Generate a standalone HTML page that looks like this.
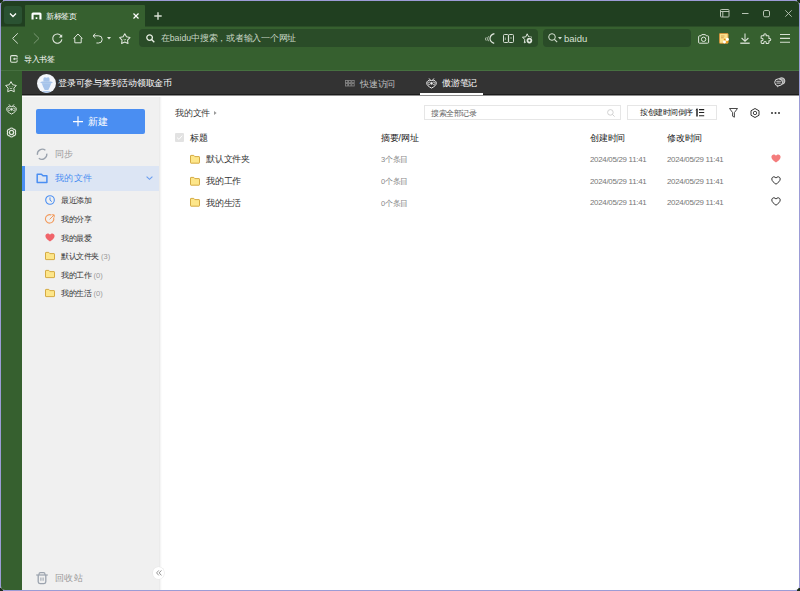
<!DOCTYPE html>
<html><head><meta charset="utf-8">
<style>
*{box-sizing:border-box;margin:0;padding:0}
html,body{width:800px;height:591px;overflow:hidden;background:#9c9cd6}
body{font-family:"Liberation Sans",sans-serif;position:relative}
.a{position:absolute}
.t{position:absolute;white-space:nowrap;line-height:1}
svg{position:absolute;overflow:visible}
.s12{font-size:7.5px;letter-spacing:-0.5px}
.s14{font-size:8.75px;letter-spacing:-0.25px}
.s15{font-size:9.375px;letter-spacing:0.375px}
.s16{font-size:10px}
.lat{letter-spacing:0}
</style></head><body>
<!-- window background layers -->
<div class="a" style="left:0;top:0;width:3px;height:3px;background:#1a2e1a"></div><div class="a" style="left:797px;top:0;width:3px;height:3px;background:#1a2e1a"></div><div class="a" style="left:0;top:588px;width:3px;height:3px;background:#1a2e1a"></div><div class="a" style="left:797px;top:588px;width:3px;height:3px;background:#1a2e1a"></div>
<div class="a" style="left:1px;top:1px;width:798px;height:589px;background:#fff;border-radius:4px;overflow:hidden">
  <div class="a" style="left:0;top:0;width:798px;height:25px;background:#203f20"></div>
  <div class="a" style="left:0;top:25px;width:798px;height:44px;background:#36602f"></div>
  <div class="a" style="left:0;top:25px;width:24px;height:1px;background:#2b4e27"></div><div class="a" style="left:144px;top:25px;width:654px;height:1px;background:#2b4e27"></div>
  <div class="a" style="left:0;top:69px;width:21px;height:520px;background:#36602f"></div>
</div>
<!-- tab strip -->
<div class="a" style="left:4px;top:6px;width:18px;height:18px;background:#2a5232;border-radius:3px"></div>
<svg style="left:9px;top:12px" width="8" height="6"><path d="M1 1.5 L4 4.5 L7 1.5" stroke="#fff" stroke-width="1.3" fill="none"/></svg>
<div class="a" style="left:25px;top:5px;width:120px;height:22px;background:#36602f;border-radius:1px 1px 0 0"></div>
<svg style="left:31px;top:12px" width="11" height="8"><path d="M0.5 7.6 V2 Q0.5 0.5 2 0.5 H9 Q10.5 0.5 10.5 2 V7.6 H8.4 V2.7 H2.6 V7.6 Z" fill="#fff"/><rect x="4.6" y="5.2" width="1.8" height="1.8" rx="0.4" fill="#fff"/></svg>
<div class="t s12" style="left:46px;top:13px;color:#fff;font-weight:500">新标签页</div>
<svg style="left:133px;top:13px" width="6" height="6"><path d="M0.5 0.5 L5.5 5.5 M5.5 0.5 L0.5 5.5" stroke="#fff" stroke-width="1.2"/></svg>
<svg style="left:154px;top:12px" width="8" height="8"><path d="M4 0.3 V7.7 M0.3 4 H7.7" stroke="#d8e0d4" stroke-width="1.4"/></svg>

<!-- window controls -->
<svg style="left:720px;top:9px" width="10" height="8"><rect x="0.5" y="0.5" width="8.5" height="7.5" rx="0.8" stroke="#b9c5b5" fill="none"/><path d="M0.5 2.5 H9 M2.8 2.5 V8" stroke="#b9c5b5" fill="none"/></svg>
<svg style="left:742px;top:13px" width="7" height="2"><path d="M0 0.5 H6.5" stroke="#b9c5b5" stroke-width="1"/></svg>
<svg style="left:763px;top:10px" width="7" height="7"><rect x="0.5" y="0.5" width="6" height="6.3" rx="1.4" stroke="#b9c5b5" fill="none"/></svg>
<svg style="left:785px;top:10px" width="7" height="7"><path d="M0.3 0.3 L6.7 6.7 M6.7 0.3 L0.3 6.7" stroke="#b9c5b5" stroke-width="0.9"/></svg>

<!-- toolbar -->
<svg style="left:12px;top:33px" width="7" height="11"><path d="M5.8 0.3 L0.6 5.4 L5.8 10.5" stroke="#d6e0d2" stroke-width="1" fill="none"/></svg>
<svg style="left:33px;top:33px" width="7" height="11"><path d="M0.8 0.3 L6 5.4 L0.8 10.5" stroke="#7a9873" stroke-width="1" fill="none"/></svg>
<svg style="left:52px;top:33px" width="11" height="11"><path d="M9.3 3.2 A4.6 4.6 0 1 0 9.9 6.4" stroke="#dfe6dc" stroke-width="1.1" fill="none"/><path d="M10.2 1.2 V4.6 H6.8 Z" fill="#dfe6dc"/></svg>
<svg style="left:73px;top:33px" width="11" height="11"><path d="M0.8 5.4 L5 1 L9.2 5.4 H8.2 V9.8 H1.8 V5.4 Z" stroke="#dfe6dc" stroke-width="1" fill="none" stroke-linejoin="round"/></svg>
<svg style="left:92px;top:33px" width="11" height="11"><path d="M3.4 0.6 L1 2.8 L3.4 5" stroke="#dfe6dc" stroke-width="1" fill="none" stroke-linejoin="round"/><path d="M1 2.8 H6.6 A3.6 3.6 0 0 1 6.6 10 H4.4" stroke="#dfe6dc" stroke-width="1" fill="none"/></svg>
<svg style="left:107px;top:37px" width="4" height="3"><path d="M0 0 H4 L2 2.5Z" fill="#dfe6dc"/></svg>
<svg style="left:118.8px;top:32.8px" width="12" height="12"><path d="M5.80 0.80 L7.50 3.85 L10.94 4.53 L8.56 7.10 L8.97 10.57 L5.80 9.10 L2.63 10.57 L3.04 7.10 L0.66 4.53 L4.10 3.85 Z" stroke="#dfe6dc" stroke-width="1.05" fill="none" stroke-linejoin="round"/><path d="M4.5 6.3 Q5.8 7.6 7.1 6.3" stroke="#dfe6dc" stroke-width="0.75" fill="none"/></svg>

<!-- address bar -->
<div class="a" style="left:139px;top:29px;width:399px;height:18px;background:#2a4c28;border-radius:4px"></div>
<svg style="left:146px;top:34px" width="9" height="9"><circle cx="3.6" cy="3.6" r="2.8" stroke="#e8efe4" stroke-width="1.3" fill="none"/><path d="M5.6 5.6 L8.3 8.3" stroke="#e8efe4" stroke-width="1.4"/></svg>
<div class="t s14" style="left:161px;top:34px;color:#c8d6c4">在<span class="lat">baidu</span>中搜索，或者输入一个网址</div>
<svg style="left:484px;top:33px" width="11" height="11"><path d="M10.4 0.6 C7.6 1.4 6 3.4 6 5.6 C6 7.8 7.6 9.6 10.2 10.4" stroke="#dfe6dc" stroke-width="1.2" fill="none"/><path d="M4.6 3.4 C3.4 4.6 3.4 6.8 4.6 8.2 M2.2 4.4 C1.4 5.2 1.4 6.6 2.2 7.6" stroke="#dfe6dc" stroke-width="0.85" fill="none"/></svg>
<svg style="left:503px;top:34px" width="11" height="9"><rect x="0.5" y="0.5" width="4.9" height="8" rx="1" stroke="#dfe6dc" stroke-width="0.95" fill="none"/><rect x="5.6" y="0.5" width="4.9" height="8" rx="1" stroke="#dfe6dc" stroke-width="0.95" fill="none"/><path d="M2.3 3.5 V6 M8 3 V5" stroke="#dfe6dc" stroke-width="0.6"/></svg>
<svg style="left:522px;top:33px" width="12" height="12"><path d="M5.20 0.80 L6.61 3.86 L9.96 4.25 L7.48 6.54 L8.14 9.85 L5.20 8.20 L2.26 9.85 L2.92 6.54 L0.44 4.25 L3.79 3.86 Z" stroke="#dfe6dc" stroke-width="1" fill="none" stroke-linejoin="round"/><circle cx="7.4" cy="7.6" r="3.6" fill="#2a4c28"/><circle cx="7.4" cy="7.6" r="2.8" fill="#dfe6dc"/><circle cx="7.4" cy="7.6" r="1.1" fill="#2a4c28"/></svg>

<!-- search box -->
<div class="a" style="left:543px;top:29px;width:148px;height:18px;background:#2a4c28;border-radius:4px"></div>
<svg style="left:548px;top:33px" width="10" height="10"><circle cx="4" cy="4" r="3.3" stroke="#d6e0d2" stroke-width="1" fill="none"/><path d="M6.4 6.4 L9.2 9.2" stroke="#d6e0d2" stroke-width="1.1"/></svg>
<svg style="left:558px;top:37px" width="4" height="3"><path d="M0 0 H4 L2 2.5Z" fill="#d6e0d2"/></svg>
<div class="t" style="left:564px;top:34px;font-size:9.5px;color:#d6e0d2">baidu</div>

<!-- right toolbar icons -->
<svg style="left:697.5px;top:33.5px" width="12" height="10"><path d="M0.6 2.8 Q0.6 1.8 1.6 1.8 H3 L3.8 0.6 H7.4 L8.2 1.8 H9.6 Q10.6 1.8 10.6 2.8 V8.4 Q10.6 9.2 9.6 9.2 H1.6 Q0.6 9.2 0.6 8.4 Z" stroke="#dfe6dc" stroke-width="1" fill="none" stroke-linejoin="round"/><circle cx="5.6" cy="5.3" r="2.2" stroke="#dfe6dc" stroke-width="1" fill="none"/></svg>
<svg style="left:719px;top:33px" width="11" height="11"><rect x="0.5" y="0.5" width="8.6" height="9.8" rx="0.6" fill="#fbe08a" stroke="#d4913a" stroke-width="0.9"/><path d="M2 3 H5.5 M2 4.8 H4.8" stroke="#c98a3c" stroke-width="0.7"/><path d="M5.6 5.4 L7 6.6 L5.8 8 L4.6 6.6 Z" fill="#e08a0e"/><circle cx="8.4" cy="6.2" r="1.5" fill="#fff"/><circle cx="5.4" cy="9" r="1.4" fill="#fff"/><circle cx="8" cy="9" r="1.1" fill="#f09a10"/></svg>
<svg style="left:740px;top:33px" width="10" height="11"><path d="M5 0.5 V8.2 M1.6 5 L5 8.3 L8.4 5" stroke="#dfe6dc" stroke-width="1.05" fill="none"/><path d="M0.3 10.2 H9.7" stroke="#dfe6dc" stroke-width="1.3"/></svg>
<svg style="left:760px;top:32.5px" width="12" height="12"><g transform="translate(0.2 0.4) scale(0.46)"><path d="M20.5 11H19V7c0-1.1-.9-2-2-2h-4V3.5C13 2.12 11.88 1 10.5 1S8 2.12 8 3.5V5H4c-1.1 0-1.99.9-1.99 2v3.8H3.5c1.49 0 2.7 1.21 2.7 2.7s-1.21 2.7-2.7 2.7H2V20c0 1.1.9 2 2 2h3.8v-1.5c0-1.49 1.21-2.7 2.7-2.7 1.490 0 2.7 1.21 2.7 2.7V22H17c1.1 0 2-.9 2-2v-4h1.5c1.38 0 2.5-1.120 2.5-2.5S21.88 11 20.5 11z" fill="none" stroke="#dfe6dc" stroke-width="2.2" stroke-linejoin="round"/></g></svg>
<svg style="left:780px;top:34px" width="10" height="9"><path d="M0 0.5 H10 M0 4.4 H10 M0 8.2 H10" stroke="#d6e0d2" stroke-width="1.1"/></svg>

<!-- bookmark bar -->
<svg style="left:10px;top:55px" width="9" height="9"><path d="M7.2 2.6 V1.8 Q7.2 0.6 6 0.6 H1.8 Q0.6 0.6 0.6 1.8 V6 Q0.6 7.2 1.8 7.2 H6 Q7.2 7.2 7.2 6 V5.2" stroke="#dfe6dc" stroke-width="1.05" fill="none"/><path d="M7.8 3.9 H4.4" stroke="#dfe6dc" stroke-width="1"/><path d="M2.8 3.9 L4.8 2.5 V5.3 Z" fill="#dfe6dc"/></svg>
<div class="t s12" style="left:24px;top:56px;color:#fff">导入书签</div>

<!-- left sidebar icons -->
<svg style="left:5px;top:81px" width="12" height="12"><path d="M6.00 0.60 L7.76 3.77 L11.33 4.47 L8.85 7.13 L9.29 10.73 L6.00 9.20 L2.71 10.73 L3.15 7.13 L0.67 4.47 L4.24 3.77 Z" stroke="#dfe6dc" stroke-width="1" fill="none" stroke-linejoin="round"/><path d="M4.7 7.2 Q6 8.2 7.3 7.2" stroke="#dfe6dc" stroke-width="0.7" fill="none"/><circle cx="4.9" cy="5.8" r="0.45" fill="#dfe6dc"/><circle cx="7.1" cy="5.8" r="0.45" fill="#dfe6dc"/></svg>
<svg style="left:5.5px;top:104px" width="11" height="11"><path d="M3 0.4 L4.2 1.9 M8 0.4 L6.8 1.9" stroke="#dfe6dc" stroke-width="0.9"/><path d="M5.5 2.5 C2.8 1.5 0.7 3.1 0.7 5.2 C0.7 7.1 2.7 8.6 5.5 10.1 C8.3 8.6 10.3 7.1 10.3 5.2 C10.3 3.1 8.2 1.5 5.5 2.5 Z" fill="none" stroke="#dfe6dc" stroke-width="1"/><circle cx="3.2" cy="5.3" r="1.3" fill="none" stroke="#dfe6dc" stroke-width="0.75"/><circle cx="7.8" cy="5.3" r="1.3" fill="none" stroke="#dfe6dc" stroke-width="0.75"/><path d="M5.5 3.4 L6.3 5.3 L5.5 7.3 L4.7 5.3 Z" fill="#dfe6dc"/></svg>
<svg style="left:5.5px;top:126.5px" width="11" height="11"><path d="M3.55 2.12 Q5.50 -0.10 7.45 2.12 Q10.35 2.70 9.40 5.50 Q10.35 8.30 7.45 8.88 Q5.50 11.10 3.55 8.88 Q0.65 8.30 1.60 5.50 Q0.65 2.70 3.55 2.12 Z" stroke="#dfe6dc" stroke-width="1.2" fill="none"/><circle cx="5.5" cy="5.5" r="2.1" stroke="#dfe6dc" stroke-width="1.3" fill="none"/></svg>

<!-- note header -->
<div class="a" style="left:1px;top:70px;width:798px;height:1px;background:#467040"></div><div class="a" style="left:22px;top:71px;width:777px;height:24px;background:#333"></div>
<div class="a" style="left:22px;top:94px;width:777px;height:1px;background:#1c1c1c"></div>

<svg style="left:37px;top:73.5px" width="19" height="19"><defs><clipPath id="av"><circle cx="9.5" cy="9.5" r="9.3"/></clipPath></defs><circle cx="9.5" cy="9.5" r="9.5" fill="#f3f6fb"/><g clip-path="url(#av)" fill="#a6c3ea"><path d="M6.5 7.6 C6.2 5.2 6.4 3.4 7.6 3.2 C8.4 3.1 9 3.7 9.5 3.7 C10 3.7 10.6 3.1 11.4 3.2 C12.6 3.4 12.8 5.2 12.5 7.6 Z"/><ellipse cx="9.5" cy="8.4" rx="6.2" ry="1.2"/><path d="M4.8 9.2 H14.2 Q13 13 11.3 16 H7.7 Q6 13 4.8 9.2 Z"/><ellipse cx="9.5" cy="20.5" rx="8" ry="3.6"/></g></svg>
<div class="t s14" style="left:58px;top:79px;color:#fff;font-weight:500">登录可参与签到活动领取金币</div>
<svg style="left:345px;top:80px" width="10" height="7"><g fill="none" stroke="#8a8a8a" stroke-width="0.8"><rect x="0.4" y="0.4" width="2.4" height="2.4"/><rect x="3.6" y="0.4" width="2.4" height="2.4"/><rect x="6.8" y="0.4" width="2.4" height="2.4"/><rect x="0.4" y="3.6" width="2.4" height="2.4"/><rect x="3.6" y="3.6" width="2.4" height="2.4"/><rect x="6.8" y="3.6" width="2.4" height="2.4"/></g></svg>
<div class="t s14" style="left:360px;top:80px;color:#c0c0c0">快速访问</div>
<svg style="left:426px;top:77.5px" width="11" height="11"><path d="M3 0.4 L4.2 1.9 M8 0.4 L6.8 1.9" stroke="#ececec" stroke-width="0.9"/><path d="M5.5 2.5 C2.8 1.5 0.7 3.1 0.7 5.2 C0.7 7.1 2.7 8.6 5.5 10.1 C8.3 8.6 10.3 7.1 10.3 5.2 C10.3 3.1 8.2 1.5 5.5 2.5 Z" fill="none" stroke="#ececec" stroke-width="1"/><circle cx="3.2" cy="5.3" r="1.3" fill="none" stroke="#ececec" stroke-width="0.7"/><circle cx="7.8" cy="5.3" r="1.3" fill="none" stroke="#ececec" stroke-width="0.7"/><path d="M5.5 3.4 L6.3 5.3 L5.5 7.2 L4.7 5.3 Z" fill="#ececec"/></svg>
<div class="t s14" style="left:442px;top:79px;color:#fff">傲游笔记</div>
<div class="a" style="left:420px;top:93px;width:63px;height:3px;background:#fff"></div>
<svg style="left:774px;top:77px" width="12" height="11"><circle cx="7.6" cy="4" r="3.3" fill="#9a9a9a" stroke="#d8d8d8" stroke-width="0.9"/><ellipse cx="4.6" cy="5.3" rx="3.9" ry="3.5" fill="#333" stroke="#e0e0e0" stroke-width="1"/><path d="M3.2 8.5 L3.4 9.9 L4.8 8.7" fill="#333" stroke="#e0e0e0" stroke-width="0.8"/><path d="M2.3 4.3 H6.9 M2.5 6.1 H6.7" stroke="#e0e0e0" stroke-width="0.85"/></svg>

<!-- left panel -->
<div class="a" style="left:22px;top:97px;width:137px;height:493px;background:#f0f0f0"></div><div class="a" style="left:159px;top:97px;width:1px;height:493px;background:#ebebeb"></div><div class="a" style="left:160px;top:97px;width:1px;height:493px;background:#f5f5f5"></div><div class="a" style="left:161px;top:97px;width:1px;height:493px;background:#fcfcfc"></div>
<div class="a" style="left:22px;top:95px;width:777px;height:1px;background:#8e8e8e"></div><div class="a" style="left:22px;top:96px;width:777px;height:1px;background:#fff"></div>
<div class="a" style="left:36px;top:109px;width:109px;height:25px;background:#4a8ef2;border-radius:2px"></div>
<svg style="left:73px;top:116px" width="10" height="11"><path d="M5 0.3 V10.3 M0 5.6 H10" stroke="#fff" stroke-width="1.1"/></svg>
<div class="t s16" style="left:88px;top:117px;color:#fff">新建</div>
<svg style="left:36px;top:148px" width="13" height="13"><path d="M9.4 2.2 A5 5 0 0 0 1.4 6.8" stroke="#9aa2ad" stroke-width="1.3" fill="none"/><path d="M2.8 10.2 A5 5 0 0 0 10.8 5.6" stroke="#9aa2ad" stroke-width="1.3" fill="none"/></svg>
<div class="t s15" style="left:55px;top:150px;color:#999">同步</div>
<div class="a" style="left:22px;top:166px;width:137px;height:25px;background:#dce5f4"></div>
<div class="a" style="left:22px;top:166px;width:3px;height:25px;background:#4a8ef2"></div>
<svg style="left:36px;top:173px" width="12" height="11"><path d="M1.2 1.2 H5.4 L7 2.8 H10.9 V9.6 H1.2 Z" stroke="#4a8ef2" stroke-width="1.5" fill="none" stroke-linejoin="round"/></svg>
<div class="t s15" style="left:55px;top:174px;color:#4a8ef2">我的文件</div>
<svg style="left:146px;top:176px" width="7" height="4"><path d="M0.6 0.6 L3.5 3.3 L6.4 0.6" stroke="#6a9ef0" stroke-width="1.15" fill="none"/></svg>

<svg style="left:45px;top:195px" width="10" height="10"><circle cx="5" cy="5" r="4.3" stroke="#4a8ef2" stroke-width="1.1" fill="none"/><path d="M5 2.4 V5.2 L6.8 6.6" stroke="#4a8ef2" stroke-width="1" fill="none"/></svg>
<div class="t s12" style="left:61px;top:197px;color:#333">最近添加</div>
<svg style="left:45px;top:214px" width="10" height="10"><path d="M8.6 3.6 A4.2 4.2 0 1 1 6.2 1" stroke="#f29a5c" stroke-width="1.1" fill="none"/><path d="M4.6 5.4 L9 1 M6.6 0.8 H9.2 V3.4" stroke="#f29a5c" stroke-width="1" fill="none"/></svg>
<div class="t s12" style="left:61px;top:216px;color:#333">我的分享</div>
<svg style="left:45px;top:233px" width="10" height="9"><path d="M5 8.6 C2.6 6.8 0.4 5.2 0.4 3 C0.4 1.4 1.6 0.4 2.8 0.4 C3.8 0.4 4.6 1 5 1.8 C5.4 1 6.2 0.4 7.2 0.4 C8.4 0.4 9.6 1.4 9.6 3 C9.6 5.2 7.4 6.8 5 8.6 Z" fill="#f0646a"/></svg>
<div class="t s12" style="left:61px;top:235px;color:#333">我的最爱</div>

<svg style="left:45px;top:252px" width="10" height="8"><path d="M0.5 0.8 Q0.5 0.4 1 0.4 H3.8 L4.8 1.6 H9 Q9.5 1.6 9.5 2.1 V7.1 Q9.5 7.6 9 7.6 H1 Q0.5 7.6 0.5 7.1 Z" fill="#fde68a" stroke="#d3a73c" stroke-width="0.95"/></svg>
<div class="t s12" style="left:61px;top:253px;color:#333">默认文件夹<span class="lat" style="color:#999;margin-left:0.5px"> (3)</span></div>
<svg style="left:45px;top:270px" width="10" height="8"><path d="M0.5 0.8 Q0.5 0.4 1 0.4 H3.8 L4.8 1.6 H9 Q9.5 1.6 9.5 2.1 V7.1 Q9.5 7.6 9 7.6 H1 Q0.5 7.6 0.5 7.1 Z" fill="#fde68a" stroke="#d3a73c" stroke-width="0.95"/></svg>
<div class="t s12" style="left:61px;top:272px;color:#333">我的工作<span class="lat" style="color:#999;margin-left:0.5px"> (0)</span></div>
<svg style="left:45px;top:289px" width="10" height="8"><path d="M0.5 0.8 Q0.5 0.4 1 0.4 H3.8 L4.8 1.6 H9 Q9.5 1.6 9.5 2.1 V7.1 Q9.5 7.6 9 7.6 H1 Q0.5 7.6 0.5 7.1 Z" fill="#fde68a" stroke="#d3a73c" stroke-width="0.95"/></svg>
<div class="t s12" style="left:61px;top:290px;color:#333">我的生活<span class="lat" style="color:#999;margin-left:0.5px"> (0)</span></div>

<svg style="left:36px;top:571.5px" width="12" height="12"><path d="M0.2 3 H11.8" stroke="#9ba3ae" stroke-width="1.2"/><path d="M3 3 V2.2 Q3 0.7 4.5 0.7 H7.5 Q9 0.7 9 2.2 V3" stroke="#9ba3ae" stroke-width="1.2" fill="none"/><path d="M2.2 3 V9.8 Q2.2 11.6 4 11.6 H8 Q9.8 11.6 9.8 9.8 V3" stroke="#9ba3ae" stroke-width="1.3" fill="none"/><path d="M4.9 5.4 V8.8 M7.1 5.4 V8.8" stroke="#9ba3ae" stroke-width="1.05"/></svg>
<div class="t s15" style="left:55px;top:574px;color:#999">回收站</div>
<div class="a" style="left:152.5px;top:567px;width:11.5px;height:11.5px;border-radius:50%;background:#fff;box-shadow:0 0 0 0.6px #e6e6e6"></div>
<svg style="left:156px;top:570px" width="6" height="6"><path d="M2.8 0.4 L0.6 2.9 L2.8 5.4 M5.4 0.4 L3.2 2.9 L5.4 5.4" stroke="#888" stroke-width="0.9" fill="none"/></svg>

<!-- main content -->
<div class="t s14" style="left:175px;top:109px;color:#3a3a3a">我的文件</div>
<svg style="left:214px;top:111px" width="3" height="4"><path d="M0 0 L2.6 2 L0 4 Z" fill="#999"/></svg>
<div class="a" style="left:424px;top:105px;width:197px;height:15px;border:1px solid #e6e6e6;background:#fff"></div>
<div class="t s12" style="left:431px;top:110px;color:#666">搜索全部记录</div>
<svg style="left:607px;top:109px" width="8" height="8"><circle cx="3.4" cy="3.4" r="2.8" stroke="#ccc" stroke-width="0.9" fill="none"/><path d="M5.4 5.4 L7.6 7.6" stroke="#ccc" stroke-width="0.9"/></svg>
<div class="a" style="left:627px;top:105px;width:90px;height:15px;border:1px solid #e6e6e6;background:#fff"></div>
<div class="t s12" style="left:640px;top:109px;color:#222">按创建时间倒序</div>
<svg style="left:695px;top:108px" width="10" height="9"><path d="M2 0.8 V8.6" stroke="#222" stroke-width="1.5"/><path d="M0.8 2 L2.2 0.8" stroke="#222" stroke-width="1"/><path d="M4 1.6 H9.2 M4 4.5 H9.2 M4 7.8 H9.2" stroke="#222" stroke-width="1.1"/></svg>
<svg style="left:729px;top:108px" width="9" height="10"><path d="M0.5 0.5 H8.5 L5.4 4.6 V9.2 L3.6 8.2 V4.6 Z" stroke="#333" stroke-width="0.9" fill="none" stroke-linejoin="round"/></svg>
<svg style="left:750px;top:108px" width="10" height="10"><path d="M5 0.5 L9 2.75 V7.25 L5 9.5 L1 7.25 V2.75 Z" stroke="#333" stroke-width="1" fill="none" stroke-linejoin="round"/><circle cx="5" cy="5" r="1.7" stroke="#333" stroke-width="0.9" fill="none"/></svg>
<svg style="left:771px;top:112px" width="9" height="2"><circle cx="1" cy="1" r="1" fill="#333"/><circle cx="4.5" cy="1" r="1" fill="#333"/><circle cx="8" cy="1" r="1" fill="#333"/></svg>

<div class="a" style="left:175px;top:133px;width:9px;height:9px;background:#e2e2e2;border-radius:1px"></div>
<svg style="left:176px;top:134px" width="7" height="7"><path d="M1 3.6 L3 5.4 L6.2 1.6" stroke="#fff" stroke-width="1" fill="none"/></svg>
<div class="t s14" style="left:190px;top:134px;color:#1a1a1a;font-weight:500">标题</div>
<div class="t s14" style="left:381px;top:134px;color:#1a1a1a;font-weight:500">摘要<span class="lat">/</span>网址</div>
<div class="t s14" style="left:590px;top:134px;color:#1a1a1a;font-weight:500">创建时间</div>
<div class="t s14" style="left:667px;top:134px;color:#1a1a1a;font-weight:500">修改时间</div>

<svg style="left:190px;top:155px" width="10" height="9"><path d="M0.5 0.8 Q0.5 0.4 1 0.4 H3.8 L4.8 1.6 H9 Q9.5 1.6 9.5 2.1 V7.6 Q9.5 8.2 9 8.2 H1 Q0.5 8.2 0.5 7.6 Z" fill="#fde68a" stroke="#d3a73c" stroke-width="0.95"/></svg>
<div class="t s14" style="left:206px;top:155px;color:#333">默认文件夹</div>
<div class="t s12" style="left:381px;top:156px;color:#888"><span class="lat">3</span>个条目</div>
<div class="t" style="left:590px;top:155.5px;font-size:7.9px;letter-spacing:-0.28px;color:#777">2024/05/29 11:41</div>
<div class="t" style="left:667px;top:155.5px;font-size:7.9px;letter-spacing:-0.28px;color:#777">2024/05/29 11:41</div>
<svg style="left:771px;top:154px" width="10" height="9"><path d="M5 8.6 C2.6 6.8 0.4 5.2 0.4 3 C0.4 1.4 1.6 0.4 2.8 0.4 C3.8 0.4 4.6 1 5 1.8 C5.4 1 6.2 0.4 7.2 0.4 C8.4 0.4 9.6 1.4 9.6 3 C9.6 5.2 7.4 6.8 5 8.6 Z" fill="#f47c7c"/></svg>

<svg style="left:190px;top:177px" width="10" height="9"><path d="M0.5 0.8 Q0.5 0.4 1 0.4 H3.8 L4.8 1.6 H9 Q9.5 1.6 9.5 2.1 V7.6 Q9.5 8.2 9 8.2 H1 Q0.5 8.2 0.5 7.6 Z" fill="#fde68a" stroke="#d3a73c" stroke-width="0.95"/></svg>
<div class="t s14" style="left:206px;top:177px;color:#333">我的工作</div>
<div class="t s12" style="left:381px;top:178px;color:#888"><span class="lat">0</span>个条目</div>
<div class="t" style="left:590px;top:178px;font-size:7.9px;letter-spacing:-0.28px;color:#777">2024/05/29 11:41</div>
<div class="t" style="left:667px;top:178px;font-size:7.9px;letter-spacing:-0.28px;color:#777">2024/05/29 11:41</div>
<svg style="left:771px;top:176px" width="10" height="9"><path d="M5 8.2 C2.8 6.6 0.8 5 0.8 3 C0.8 1.6 1.8 0.8 2.9 0.8 C3.8 0.8 4.6 1.3 5 2.1 C5.4 1.3 6.2 0.8 7.1 0.8 C8.2 0.8 9.2 1.6 9.2 3 C9.2 5 7.2 6.6 5 8.2 Z" fill="none" stroke="#333" stroke-width="1"/></svg>

<svg style="left:190px;top:198px" width="10" height="9"><path d="M0.5 0.8 Q0.5 0.4 1 0.4 H3.8 L4.8 1.6 H9 Q9.5 1.6 9.5 2.1 V7.6 Q9.5 8.2 9 8.2 H1 Q0.5 8.2 0.5 7.6 Z" fill="#fde68a" stroke="#d3a73c" stroke-width="0.95"/></svg>
<div class="t s14" style="left:206px;top:199px;color:#333">我的生活</div>
<div class="t s12" style="left:381px;top:200px;color:#888"><span class="lat">0</span>个条目</div>
<div class="t" style="left:590px;top:199px;font-size:7.9px;letter-spacing:-0.28px;color:#777">2024/05/29 11:41</div>
<div class="t" style="left:667px;top:199px;font-size:7.9px;letter-spacing:-0.28px;color:#777">2024/05/29 11:41</div>
<svg style="left:771px;top:197px" width="10" height="9"><path d="M5 8.2 C2.8 6.6 0.8 5 0.8 3 C0.8 1.6 1.8 0.8 2.9 0.8 C3.8 0.8 4.6 1.3 5 2.1 C5.4 1.3 6.2 0.8 7.1 0.8 C8.2 0.8 9.2 1.6 9.2 3 C9.2 5 7.2 6.6 5 8.2 Z" fill="none" stroke="#333" stroke-width="1"/></svg>

</body></html>
